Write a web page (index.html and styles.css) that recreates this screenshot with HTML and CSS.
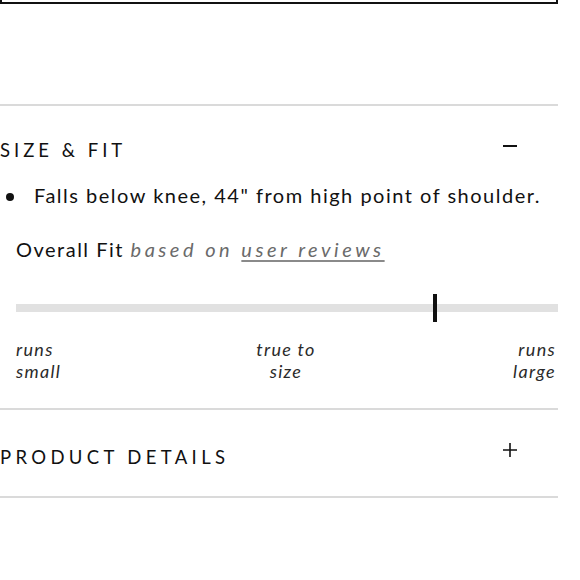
FILE: index.html
```html
<!DOCTYPE html>
<html>
<head>
<meta charset="utf-8">
<link rel="stylesheet" href="styles.css">
</head>
<body>
<div class="page">
  <div class="button-edge"></div>
  <section class="acc acc-open">
    <div class="acc-head">
      <h2 class="acc-title">SIZE &amp; FIT</h2>
      <svg class="acc-icon icon-minus" width="14" height="14" viewBox="0 0 14 14"><path d="M0 7H14" stroke="#111" stroke-width="2"/></svg>
    </div>
    <ul class="bullets">
      <li>Falls below knee, 44" from high point of shoulder.</li>
    </ul>
    <div class="fit">
      <p class="fit-title">Overall Fit <em class="fit-sub">based on <span class="fit-link">user reviews</span></em></p>
      <div class="track"><div class="marker" style="left: 76.9%"></div></div>
      <div class="labels">
        <span class="lbl lbl-left">runs<br>small</span>
        <span class="lbl lbl-mid">true to<br>size</span>
        <span class="lbl lbl-right">runs<br>large</span>
      </div>
    </div>
  </section>
  <section class="acc acc-closed">
    <div class="acc-head">
      <h2 class="acc-title title-wide">PRODUCT DETAILS</h2>
      <svg class="acc-icon icon-plus" width="14" height="14" viewBox="0 0 14 14"><path d="M0 7H14M7 0V14" stroke="#111" stroke-width="1.6"/></svg>
    </div>
  </section>
</div>
</body>
</html>
```
FILE: styles.css
```css
* { box-sizing: border-box; }
html, body { margin: 0; padding: 0; background: #fff; }
body { font-family: "Lato", "Open Sans", sans-serif; color: #111; }
.page { width: 558px; }
.button-edge {
  height: 4px;
  border: 2px solid #111;
  border-top: none;
}
.acc { border-top: 2px solid #dadada; }
.acc-open { margin-top: 100px; }
.acc-closed { border-bottom: 2px solid #dadada; height: 90px; }
.acc-head {
  display: flex;
  justify-content: space-between;
  align-items: flex-start;
}
.acc-open .acc-head { padding-top: 32px; }
.acc-closed .acc-head { padding-top: 35px; }
.acc-title {
  margin: 0;
  font-size: 18.5px;
  line-height: 24px;
  font-weight: 400;
  letter-spacing: 4px;
}
.title-wide { letter-spacing: 4.35px; }
.acc-icon { margin-right: 41px; }
.icon-minus { margin-top: 1px; }
.icon-plus { margin-top: -2px; }
.bullets {
  list-style: none;
  margin: 20px 0 0;
  padding: 0 0 0 34px;
}
.bullets li {
  position: relative;
  font-size: 20px;
  line-height: 26px;
  letter-spacing: 1.5px;
}
.bullets li::before {
  content: "";
  position: absolute;
  left: -28px;
  top: 11px;
  width: 8px;
  height: 8px;
  border-radius: 50%;
  background: #111;
}
.fit { padding: 0 0 0 16px; }
.fit-title {
  margin: 28px 0 0;
  font-size: 20px;
  line-height: 26px;
  letter-spacing: 1.5px;
}
.fit-sub { color: #6a6a6a; letter-spacing: 3.5px; font-size: 20px; }
.fit-link { text-decoration: underline; text-underline-offset: 3px; text-decoration-color: #8a8a8a; }
.track {
  position: relative;
  margin-top: 42px;
  height: 8px;
  background: #e1e1e1;
}
.marker {
  position: absolute;
  top: -10px;
  width: 4px;
  height: 28px;
  background: #111;
}
.labels {
  display: grid;
  grid-template-columns: 1fr auto 1fr;
  margin-top: 26px;
  padding-right: 2px;
  padding-bottom: 26px;
}
.lbl {
  font-style: italic;
  font-size: 18px;
  line-height: 22px;
  color: #2a2a2a;
  letter-spacing: 1.3px;
}
.lbl-left { text-align: left; }
.lbl-mid { text-align: center; }
.lbl-right { text-align: right; }
```
